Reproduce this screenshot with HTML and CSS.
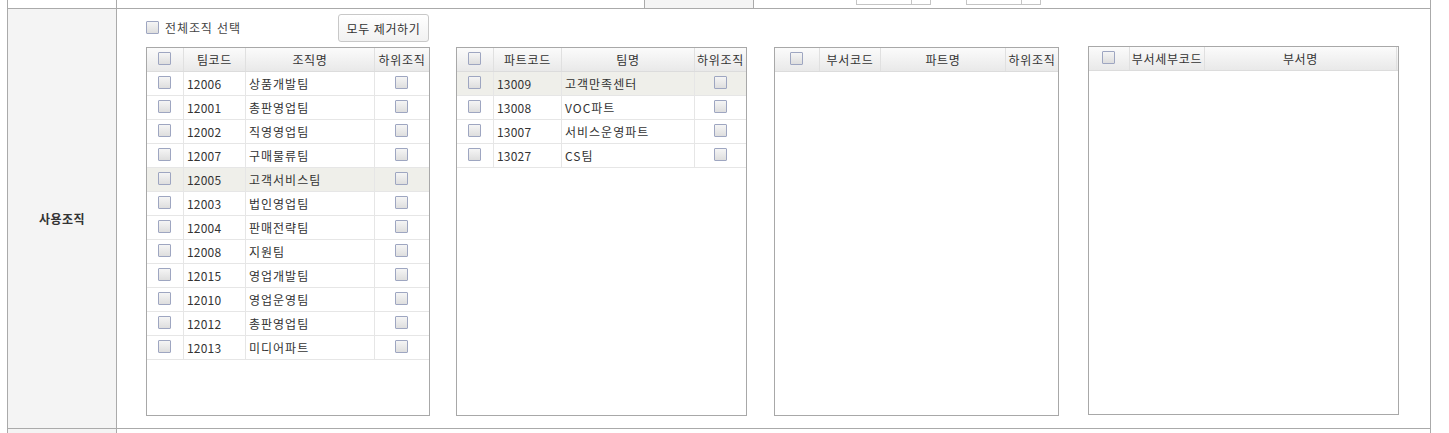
FILE: index.html
```html
<!DOCTYPE html>
<html lang="ko">
<head>
<meta charset="utf-8">
<title>사용조직</title>
<link rel="stylesheet" href="styles.css">
</head>
<body>
<div class="sheet">
  <div class="row top">
    <div class="lbl lbl-white"></div>
    <div class="cell top-cell">
      <div class="th-gray"></div>
      <div class="sel sel1"><span class="sel-arrow"></span></div>
      <div class="sel sel2"><span class="sel-arrow"></span></div>
    </div>
  </div>

  <div class="row main">
    <div class="lbl">사용조직</div>
    <div class="cell content">
      <div class="toolbar">
        <label class="all"><span class="cb"></span><span class="all-text">전체조직 선택</span></label>
        <button class="btn" type="button">모두 제거하기</button>
      </div>
      <div class="grids">
        <div class="grid g1">
          <div class="r hd"><div class="c cc"><span class="cb"></span></div><div class="c ct">팀코드</div><div class="c ct">조직명</div><div class="c ct last">하위조직</div></div>
          <div class="r"><div class="c cc"><span class="cb"></span></div><div class="c">12006</div><div class="c nm">상품개발팀</div><div class="c cc last"><span class="cb"></span></div></div>
          <div class="r"><div class="c cc"><span class="cb"></span></div><div class="c">12001</div><div class="c nm">총판영업팀</div><div class="c cc last"><span class="cb"></span></div></div>
          <div class="r"><div class="c cc"><span class="cb"></span></div><div class="c">12002</div><div class="c nm">직영영업팀</div><div class="c cc last"><span class="cb"></span></div></div>
          <div class="r"><div class="c cc"><span class="cb"></span></div><div class="c">12007</div><div class="c nm">구매물류팀</div><div class="c cc last"><span class="cb"></span></div></div>
          <div class="r hl"><div class="c cc"><span class="cb"></span></div><div class="c">12005</div><div class="c nm">고객서비스팀</div><div class="c cc last"><span class="cb"></span></div></div>
          <div class="r"><div class="c cc"><span class="cb"></span></div><div class="c">12003</div><div class="c nm">법인영업팀</div><div class="c cc last"><span class="cb"></span></div></div>
          <div class="r"><div class="c cc"><span class="cb"></span></div><div class="c">12004</div><div class="c nm">판매전략팀</div><div class="c cc last"><span class="cb"></span></div></div>
          <div class="r"><div class="c cc"><span class="cb"></span></div><div class="c">12008</div><div class="c nm">지원팀</div><div class="c cc last"><span class="cb"></span></div></div>
          <div class="r"><div class="c cc"><span class="cb"></span></div><div class="c">12015</div><div class="c nm">영업개발팀</div><div class="c cc last"><span class="cb"></span></div></div>
          <div class="r"><div class="c cc"><span class="cb"></span></div><div class="c">12010</div><div class="c nm">영업운영팀</div><div class="c cc last"><span class="cb"></span></div></div>
          <div class="r"><div class="c cc"><span class="cb"></span></div><div class="c">12012</div><div class="c nm">총판영업팀</div><div class="c cc last"><span class="cb"></span></div></div>
          <div class="r"><div class="c cc"><span class="cb"></span></div><div class="c">12013</div><div class="c nm">미디어파트</div><div class="c cc last"><span class="cb"></span></div></div>
        </div>

        <div class="grid g2">
          <div class="r hd"><div class="c cc"><span class="cb"></span></div><div class="c ct">파트코드</div><div class="c ct">팀명</div><div class="c ct last">하위조직</div></div>
          <div class="r hl"><div class="c cc"><span class="cb"></span></div><div class="c">13009</div><div class="c nm">고객만족센터</div><div class="c cc last"><span class="cb"></span></div></div>
          <div class="r"><div class="c cc"><span class="cb"></span></div><div class="c">13008</div><div class="c nm">VOC파트</div><div class="c cc last"><span class="cb"></span></div></div>
          <div class="r"><div class="c cc"><span class="cb"></span></div><div class="c">13007</div><div class="c nm">서비스운영파트</div><div class="c cc last"><span class="cb"></span></div></div>
          <div class="r"><div class="c cc"><span class="cb"></span></div><div class="c">13027</div><div class="c nm">CS팀</div><div class="c cc last"><span class="cb"></span></div></div>
        </div>

        <div class="grid g3">
          <div class="r hd"><div class="c cc"><span class="cb"></span></div><div class="c ct">부서코드</div><div class="c ct">파트명</div><div class="c ct last">하위조직</div></div>
        </div>

        <div class="grid g4">
          <div class="r hd"><div class="c cc"><span class="cb"></span></div><div class="c ct">부서세부코드</div><div class="c ct">부서명</div><div class="c last"></div></div>
        </div>
      </div>
    </div>
  </div>

  <div class="row bottom">
    <div class="lbl"></div>
    <div class="cell"></div>
  </div>
</div>
</body>
</html>
```

FILE: styles.css
```css
* { box-sizing: border-box; }

html, body {
  margin: 0;
  padding: 0;
  background: #fff;
}

body {
  font-family: "Noto Sans CJK KR", "Malgun Gothic", "Noto Sans", sans-serif;
  font-size: 12px;
  color: #333;
}

.sheet {
  margin-left: 7px;
  width: 1424px;
  border-left: 1px solid #aaa;
  border-right: 1px solid #aaa;
}

.row {
  display: flex;
  border-bottom: 1px solid #aaa;
}

.lbl {
  width: 109px;
  flex: 0 0 109px;
  border-right: 1px solid #aaa;
  background: #f4f4f4;
  display: flex;
  align-items: center;
  justify-content: center;
  font-weight: bold;
  color: #333;
  letter-spacing: 0.5px;
}

.lbl-white { background: #fff; }

.cell { flex: 1 1 auto; }

/* cropped row at the very top */
.row.top {
  height: 9px;
  overflow: hidden;
}

.top-cell {
  display: flex;
  align-items: flex-end;
  height: 8px;
}

.th-gray {
  align-self: stretch;
  margin-left: 527px;
  width: 110px;
  background: #f4f4f4;
  border-left: 1px solid #aaa;
  border-right: 1px solid #aaa;
}

.sel {
  position: relative;
  width: 75px;
  height: 20px;
  margin-bottom: 3px;
  border: 1px solid #c4c4c4;
  background: #fff;
}

.sel1 { margin-left: 102px; }
.sel2 { margin-left: 35px; }

.sel-arrow {
  position: absolute;
  top: 0;
  bottom: 0;
  right: 0;
  width: 19px;
  border-left: 1px solid #c4c4c4;
}

/* main row */
.row.main { height: 420px; }

.content {
  padding: 5px 0 0 29px;
}

.toolbar {
  width: 283px;
  height: 28px;
  display: flex;
  align-items: center;
  justify-content: space-between;
}

.all {
  display: flex;
  align-items: center;
  margin-top: -1px;
}

.all-text {
  margin-left: 6px;
  color: #444;
  letter-spacing: 0.9px;
}

.btn {
  width: 91px;
  height: 28px;
  padding: 0;
  font-family: inherit;
  font-size: 12px;
  color: #333;
  background: linear-gradient(#ffffff, #f1f1f1);
  border: 1px solid #c8c8c8;
  border-radius: 3px;
  letter-spacing: 0.6px;
}

.cb {
  display: inline-block;
  width: 13px;
  height: 13px;
  border: 1px solid #9ea6c1;
  background: linear-gradient(#f5f5f5, #dedede);
  border-radius: 1px;
}

.grids {
  display: flex;
  align-items: flex-start;
  margin-top: 5px;
}

.grid {
  height: 369px;
  border: 1px solid #a8a8a8;
  background: #fff;
}

.g1 { width: 284px; }
.g2 { width: 291px; margin-left: 26px; }
.g3 { width: 285px; margin-left: 27px; }
.g4 { width: 311px; margin-left: 29px; margin-top: -1px; }

.r {
  display: grid;
  height: 24px;
  border-bottom: 1px solid #e6e6e6;
}

.g1 .r { grid-template-columns: 37px 62px 129px 54px; }
.g2 .r { grid-template-columns: 37px 68px 133px 51px; }
.g3 .r { grid-template-columns: 45px 61px 125px 52px; }
.g4 .r { grid-template-columns: 41px 75px 192px 1px; }

.r.hd {
  background: linear-gradient(#fbfbfb, #e9e9e9);
  border-bottom: 1px solid #dcdcdc;
}

.r.hl { background: #efefea; }

.c {
  border-right: 1px solid #e6e6e6;
  display: flex;
  align-items: center;
  padding-left: 3px;
  white-space: nowrap;
  overflow: hidden;
  letter-spacing: 0.2px;
}

.c.nm { letter-spacing: 1px; }

.hd .c { border-right-color: #e0e0e0; }

.c.last { border-right: none; }

.c.cc {
  justify-content: center;
  padding-left: 0;
}

.c.cc .cb { margin-bottom: 2px; margin-right: 1px; }

.c.ct {
  justify-content: center;
  padding-left: 0;
  color: #333;
  letter-spacing: 0.7px;
}

/* bottom cropped row */
.row.bottom {
  height: 10px;
  border-bottom: none;
}
```
